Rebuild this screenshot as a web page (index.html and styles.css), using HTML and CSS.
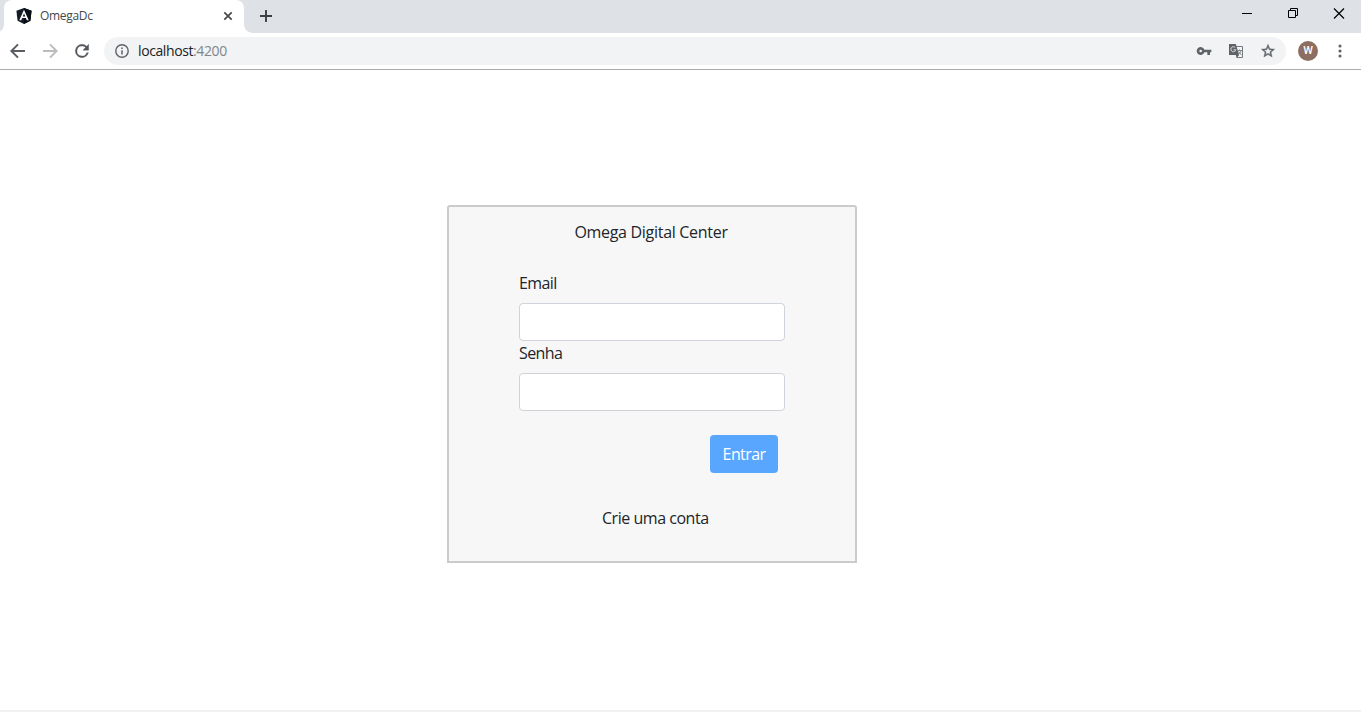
FILE: index.html
```html
<!DOCTYPE html>
<html lang="pt-BR">
<head>
<meta charset="utf-8">
<title>OmegaDc</title>
<link rel="stylesheet" href="styles.css">
</head>
<body>
<div class="window">
  <header class="tabstrip">
    <div class="tab">
      <svg class="favicon" width="16" height="16" viewBox="0 0 16 16"><path d="M8 0l7.600 2.700-1.200 10L8 16l-6.400-3.300L.4 2.700z" fill="#151c26"/><path d="M8 0l7.600 2.700-1.200 10L8 16z" fill="#080d16"/><path d="M8 1.800L3.300 12.300h1.900l.9-2.300h3.800l.9 2.300h1.900zm0 3.600l1.300 3.100H6.700z" fill="#fff"/></svg>
      <span class="tab-title">OmegaDc</span>
      <svg class="tab-close" width="10" height="10" viewBox="0 0 10 10"><path d="M1.300 1.300l7.400 7.400M8.700 1.300L1.300 8.700" stroke="#45494d" stroke-width="1.700"/></svg>
    </div>
    <svg class="new-tab" width="12" height="12" viewBox="0 0 12 12"><path d="M6 0v12M0 6h12" stroke="#3c4043" stroke-width="1.900"/></svg>
    <div class="window-controls">
      <svg width="46" height="28" viewBox="0 0 46 28"><path d="M18 13.500h10" stroke="#000"/></svg>
      <svg width="46" height="28" viewBox="0 0 46 28"><path d="M18.500 10.500h7v7h-7zM20.500 10.500v-2h7v7h-2" fill="none" stroke="#000"/></svg>
      <svg width="46" height="28" viewBox="0 0 46 28"><path d="M18 8.500l10 10M28 8.500l-10 10" stroke="#000" stroke-width="1.200"/></svg>
    </div>
  </header>
  <div class="toolbar">
    <svg class="nav" width="24" height="24" viewBox="0 0 24 24"><path d="M19 12H6M12 5.400L5.400 12l6.600 6.600" fill="none" stroke="#5a5d61" stroke-width="2"/></svg>
    <svg class="nav" width="24" height="24" viewBox="0 0 24 24"><path d="M5 12h13M12 5.400l6.600 6.600-6.600 6.600" fill="none" stroke="#babcbe" stroke-width="2"/></svg>
    <svg class="nav reload" width="20" height="20" viewBox="0 0 24 24"><path d="M17.650 6.350A7.960 7.960 0 0 0 12 4a8 8 0 1 0 7.730 10h-2.080A6 6 0 1 1 12 6c1.660 0 3.140.69 4.220 1.780L13 11h7V4z" fill="#53575b" stroke="#53575b" stroke-width=".4"/></svg>
    <div class="omnibox">
      <svg class="info" width="14" height="14" viewBox="0 0 14 14"><circle cx="7" cy="7" r="6.200" fill="none" stroke="#5f6368" stroke-width="1.400"/><path d="M7 6.200v4.300M7 3.500v1.500" stroke="#5f6368" stroke-width="1.500"/></svg>
      <span class="url">localhost<span class="port">:4200</span></span>
      <div class="actions">
        <svg width="16" height="16" viewBox="0 0 24 24"><path d="M12.650 10A6 6 0 1 0 12.650 14H17v4h4v-4h2v-4zM7 14a2 2 0 1 1 0-4 2 2 0 0 1 0 4z" fill="#5f6368"/></svg>
        <svg width="16" height="16" viewBox="0 0 16 16"><path d="M7 3.500h7.500v11H8.700" fill="none" stroke="#777b7f"/><path d="M1 1h6.800l3.300 11H1z" fill="#5f6368"/><path d="M7.800 12h3.300l-2.400 3z" fill="#5f6368"/><path d="M7.300 4.700a2.500 2.500 0 1 0 .5 2.100H5.500" fill="none" stroke="#dfe1e3"/><path d="M9.500 7.500H14M11.500 6.500v1M13 7.500c-.4 2-1.600 3.300-3 4M10.500 8.500l3 3.500" fill="none" stroke="#777b7f" stroke-width=".9"/></svg>
        <svg width="16" height="16" viewBox="0 0 24 24"><path d="M22 9.240l-7.190-.62L12 2 9.190 8.630 2 9.240l5.460 4.730L5.820 21 12 17.270 18.180 21l-1.630-7.030zM12 15.400l-3.760 2.270 1-4.280-3.320-2.880 4.380-.38L12 6.100l1.710 4.040 4.380.38-3.320 2.880 1 4.280z" fill="#5f6368" stroke="#5f6368" stroke-width=".6"/></svg>
      </div>
    </div>
    <div class="avatar">W</div>
    <svg class="menu" width="4" height="14" viewBox="0 0 4 14"><g fill="#5f6368"><circle cx="2" cy="2" r="1.550"/><circle cx="2" cy="7" r="1.550"/><circle cx="2" cy="12" r="1.550"/></g></svg>
  </div>
  <main class="page">
    <form class="card">
      <div class="title">Omega Digital Center</div>
      <div class="fields">
        <label class="label email" for="email">Email</label>
        <input class="input" id="email" type="email">
        <label class="label senha" for="senha">Senha</label>
        <input class="input" id="senha" type="password">
      </div>
      <button class="submit" type="button"><span>Entrar</span></button>
      <div class="signup">Crie uma conta</div>
    </form>
  </main>
</div>
</body>
</html>
```
FILE: styles.css
```css
* { box-sizing: border-box; }
body { margin: 0; background: #fff; font-family: "Open Sans", "Noto Sans", sans-serif; color: #212529; }
svg { display: block; flex: none; }
.window { display: flex; flex-direction: column; width: 1361px; height: 712px; overflow: hidden; }
.tabstrip { display: flex; align-items: flex-start; height: 33px; padding-left: 4px; background: #dee1e6; }
.tab { position: relative; display: flex; align-items: center; width: 240px; height: 33px; padding: 0 11px 2px 12px; border-radius: 8px 8px 0 0; background: #fff; }
.tab::before, .tab::after { content: ""; position: absolute; bottom: 0; width: 8px; height: 8px; }
.tab::before { left: -8px; background: radial-gradient(circle at 0 0, transparent 7.500px, #fff 8px); }
.tab::after { right: -8px; background: radial-gradient(circle at 100% 0, transparent 7.500px, #fff 8px); }
.tab-title { margin-left: 8px; font-size: 12px; letter-spacing: -.3px; color: #45494d; }
.tab-close { margin-left: auto; }
.new-tab { margin: 10px 0 0 16px; }
.window-controls { display: flex; margin-left: auto; margin-right: -1px; }
.toolbar { display: flex; align-items: center; height: 37px; padding: 0 18px 0 6px; border-bottom: 1px solid #a9abad; }
.nav + .nav { margin-left: 8px; }
.nav + .reload { margin-left: 10px; }
.omnibox { display: flex; align-items: center; width: 1182px; height: 28px; margin-left: 12px; padding: 0 10px 0 11px; border-radius: 14px; background: #f1f3f4; }
.url { margin-left: 9px; font-size: 14px; line-height: 20px; letter-spacing: -.4px; color: #202124; }
.port { color: #80868b; }
.actions { display: flex; gap: 16px; margin-left: auto; }
.avatar { width: 20px; height: 20px; margin-left: 12px; border-radius: 50%; background: #8d6e63; color: #fff; font: 500 11px/20px Roboto, sans-serif; text-align: center; }
.menu { margin-left: auto; }
.page { flex: 1; display: flex; align-items: flex-start; padding: 135px 0 0 447px; border-bottom: 2px solid #f1f1f1; }
.card { display: flex; flex-direction: column; width: 410px; height: 358px; padding-top: 13px; border: 2px solid #cbcbcb; border-radius: 3px 3px 0 0; background: #f7f7f7; font-size: 16px; line-height: 24px; }
.title { padding-right: 2px; text-align: center; letter-spacing: -.3px; }
.fields { display: flex; flex-direction: column; width: 266px; margin: 27px 0 0 70px; }
.label { margin-bottom: 8px; letter-spacing: -.6px; }
.input { width: 100%; height: 38px; padding: 6px 12px; border: 1px solid #ced4da; border-radius: 4px; background: #fff; }
.submit { width: 68px; height: 38px; margin: 24px 0 0 261px; padding: 0; border: 0; border-radius: 4px; background: #59a6ff; color: #fff; font: 16px/24px "Open Sans", sans-serif; letter-spacing: -.6px; }
.signup { margin: 33px 0 0 153px; letter-spacing: -.47px; }
.menu { margin-right: 1px; }
```
